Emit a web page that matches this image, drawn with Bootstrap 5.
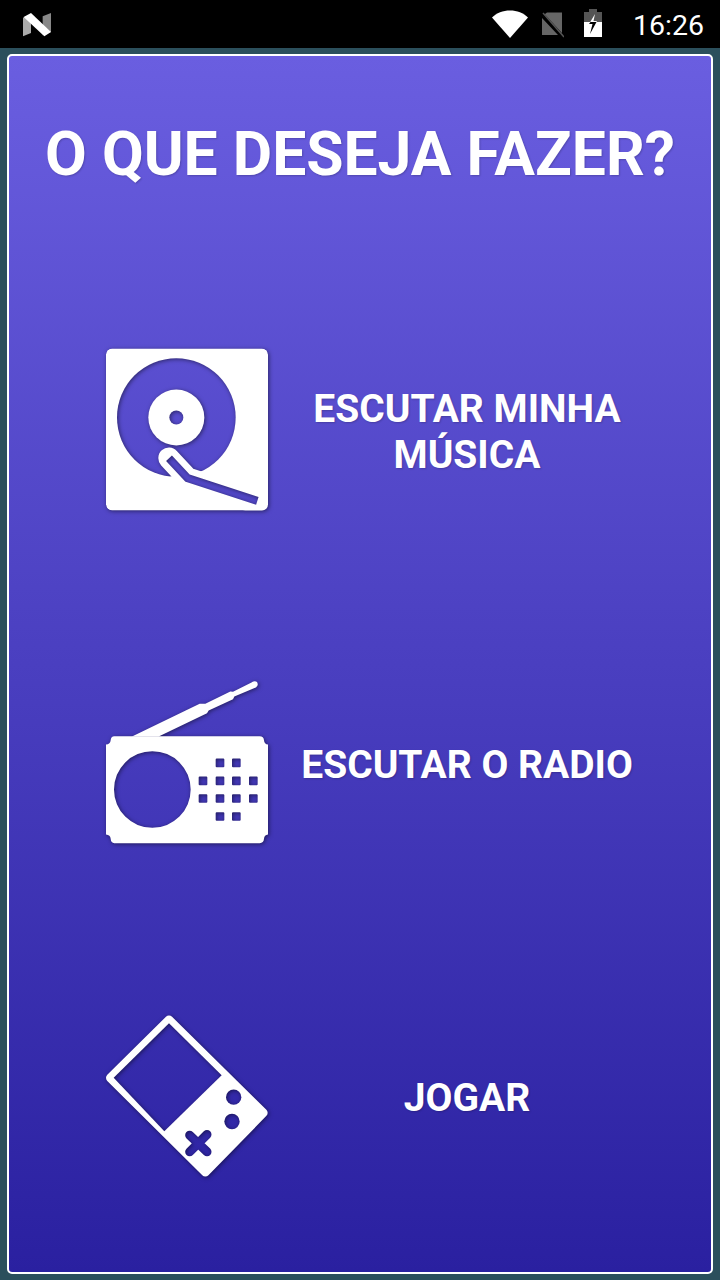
<!DOCTYPE html>
<html lang="pt">

<head>
	<meta charset="UTF-8">
	<meta name="viewport" content="width=device-width, initial-scale=1.0">
	<title>O que deseja fazer?</title>
	<link href="https://cdn.jsdelivr.net/npm/bootstrap@5.3.0/dist/css/bootstrap.min.css" rel="stylesheet">
	<style>
		html, body { height: 1280px; overflow: hidden; }
		body { background: #2b4f5c; font-family: Roboto, "Liberation Sans", sans-serif; }
		.status-bar { height: 48px; background: #000; color: #fff; padding: 0 16px 0 21px; }
		.status-time { font-size: 28.500px; line-height: 48px; margin-left: 11px; padding-top: 4px; }
		.status-icons { gap: 19px; }
		.status-signal { gap: 12px; }
		.status-battery { margin-top: -2px; }
		.main-panel {
			height: 1220px;
			margin: 6px 7px;
			border: 2px solid #fff;
			border-radius: 5px;
			background: linear-gradient(180deg, #6a5ee0 0%, #2a20a0 100%);
			color: #fff;
		}
		.main-title { font-size: 60.600px; line-height: 70px; font-weight: 700; margin: 64px 0 158px; text-align: center; text-shadow: 1px 1px 2px rgba(0, 0, 0, .2); white-space: nowrap; }
		.menu-list { gap: 170px; padding: 0 45px 0 97px; }
		.menu-icon { width: 162px; height: 163px; flex: none; overflow: visible; filter: drop-shadow(1px 1px 2px rgba(0, 0, 0, .5)); }
		.menu-label { font-size: 39px; line-height: 46px; font-weight: 700; padding-top: 5px; text-shadow: 1px 1px 2px rgba(0, 0, 0, .2); }
	</style>
</head>

<body>
	<!-- Barra de status -->
	<div class="status-bar d-flex align-items-center justify-content-between">
		<svg width="32" height="27" viewBox="60 32 96 81">
			<polygon points="66,52 90,42 90,98 66,108" fill="#aaa"/>
			<polygon points="125,48 150,38 150,95 125,105" fill="#888"/>
			<polygon points="68,50 90,38 150,95 130,108" fill="#fff"/>
		</svg>
		<div class="status-icons d-flex align-items-center">
			<div class="status-signal d-flex align-items-center">
				<svg width="36" height="28" viewBox="0 0 36 28">
					<path d="M0 7.500C4.500 3 11 .5 18 .5S31.500 3 36 7.500L18 28Z" fill="#fff"/>
				</svg>
				<svg width="24" height="27" viewBox="0 0 24 27">
					<path d="M7 1.500H22V23L3 4.500Z M2 7L18 24H2Z" fill="#666"/>
					<path d="M1 1L23 25" stroke="#000" stroke-width="2.500"/>
					<path d="M3 2L24 26" stroke="#555" stroke-width="1.500"/>
				</svg>
			</div>
			<svg class="status-battery" width="20" height="28" viewBox="0 0 20 28">
				<path d="M6 0H14V3H19V13H1V3H6Z" fill="#555"/>
				<rect x="1" y="13" width="18" height="15" fill="#fff"/>
				<polygon points="12,5 6,15 9.500,15 7,25 14,12 10.500,12 12,5" fill="#fff"/>
				<polygon points="7.500,13 6,15 9.500,15 7,25 13.500,13 10.500,13" fill="#000"/>
			</svg>
			<span class="status-time">16:26</span>
		</div>
	</div>

	<div class="main-panel">
		<h1 class="main-title">O QUE DESEJA FAZER?</h1>

		<div class="menu-list d-flex flex-column">
			<!-- Minha musica -->
			<div class="d-flex align-items-center">
				<svg class="menu-icon" viewBox="47 40 486 486">
					<mask id="maskDisco">
						<rect x="47" y="40" width="486" height="486" rx="18" fill="#fff"/>
						<circle cx="258" cy="247" r="178" fill="#000"/>
						<circle cx="258" cy="247" r="84" fill="#fff"/>
						<circle cx="258" cy="247" r="21" fill="#000"/>
						<polygon points="240,425 238,440 300,470 560,560 560,420 340,408" fill="#fff"/>
						<path d="M236 369L292 429L501 497" fill="none" stroke="#fff" stroke-width="64" stroke-linejoin="round" stroke-linecap="round"/>
						<path d="M236 369L292 429L501 497" fill="none" stroke="#000" stroke-width="24" stroke-linejoin="round"/>
					</mask>
					<rect x="47" y="40" width="486" height="486" rx="18" fill="#fff" mask="url(#maskDisco)"/>
				</svg>
				<div class="menu-label flex-grow-1 text-center">ESCUTAR MINHA<br>MÚSICA</div>
			</div>

			<!-- Radio -->
			<div class="d-flex align-items-center">
				<svg class="menu-icon" viewBox="47 33 486 486">
					<path fill="#fff" fill-rule="evenodd" d="M72 197H508Q520 197 521 209Q522 221 533 222V492Q522 493 521 505Q520 518 508 518H72Q62 518 61 505Q60 493 47 492V222Q60 221 61 209Q62 197 72 197Z
						M301 357A115 115 0 1 0 71 357A115 115 0 1 0 301 357Z
						M379 264h20a3 3 0 0 1 3 3v20a3 3 0 0 1-3 3h-20a3 3 0 0 1-3-3v-20a3 3 0 0 1 3-3Z
						M428 264h20a3 3 0 0 1 3 3v20a3 3 0 0 1-3 3h-20a3 3 0 0 1-3-3v-20a3 3 0 0 1 3-3Z
						M328 318h20a3 3 0 0 1 3 3v20a3 3 0 0 1-3 3h-20a3 3 0 0 1-3-3v-20a3 3 0 0 1 3-3Z
						M379 318h20a3 3 0 0 1 3 3v20a3 3 0 0 1-3 3h-20a3 3 0 0 1-3-3v-20a3 3 0 0 1 3-3Z
						M428 318h20a3 3 0 0 1 3 3v20a3 3 0 0 1-3 3h-20a3 3 0 0 1-3-3v-20a3 3 0 0 1 3-3Z
						M479 318h20a3 3 0 0 1 3 3v20a3 3 0 0 1-3 3h-20a3 3 0 0 1-3-3v-20a3 3 0 0 1 3-3Z
						M328 371h20a3 3 0 0 1 3 3v20a3 3 0 0 1-3 3h-20a3 3 0 0 1-3-3v-20a3 3 0 0 1 3-3Z
						M379 371h20a3 3 0 0 1 3 3v20a3 3 0 0 1-3 3h-20a3 3 0 0 1-3-3v-20a3 3 0 0 1 3-3Z
						M428 371h20a3 3 0 0 1 3 3v20a3 3 0 0 1-3 3h-20a3 3 0 0 1-3-3v-20a3 3 0 0 1 3-3Z
						M479 371h20a3 3 0 0 1 3 3v20a3 3 0 0 1-3 3h-20a3 3 0 0 1-3-3v-20a3 3 0 0 1 3-3Z
						M379 425h20a3 3 0 0 1 3 3v20a3 3 0 0 1-3 3h-20a3 3 0 0 1-3-3v-20a3 3 0 0 1 3-3Z
						M428 425h20a3 3 0 0 1 3 3v20a3 3 0 0 1-3 3h-20a3 3 0 0 1-3-3v-20a3 3 0 0 1 3-3Z"/>
					<polygon fill="#fff" points="125,198 328,100 345,100 420,63 428,64 488,34 498,50 432,78 428,86 355,120 350,128 205,198"/>
					<circle cx="493" cy="41" r="9" fill="#fff"/>
				</svg>
				<div class="menu-label flex-grow-1 text-center">ESCUTAR O RADIO</div>
			</div>

			<!-- Jogar -->
			<div class="d-flex align-items-center">
				<svg class="menu-icon" viewBox="47 40 486 486">
					<mask id="maskJogo">
						<polygon points="236,56 60,230 345,513 519,335" fill="#fff" stroke="#fff" stroke-width="26" stroke-linejoin="round"/>
						<polygon points="236,66 70,230 222,390 394,222" fill="#000"/>
						<circle cx="430" cy="288" r="23" fill="#000"/>
						<circle cx="425" cy="361" r="23" fill="#000"/>
						<path d="M298 402L350 452M350 400L298 452" stroke="#000" stroke-width="27" stroke-linecap="round"/>
					</mask>
					<rect x="40" y="30" width="500" height="500" fill="#fff" mask="url(#maskJogo)"/>
				</svg>
				<div class="menu-label flex-grow-1 text-center">JOGAR</div>
			</div>
		</div>
	</div>

	<script src="https://cdn.jsdelivr.net/npm/bootstrap@5.3.0/dist/js/bootstrap.bundle.min.js"></script>
</body>

</html>
